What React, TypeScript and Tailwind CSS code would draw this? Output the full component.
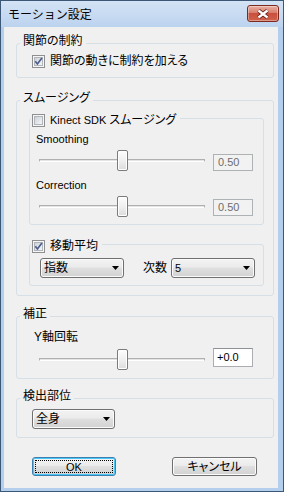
import React from "react";

const FONT = "font-['Liberation_Sans','Noto_Sans_CJK_JP',sans-serif]";

function CheckBox({ checked }: { checked?: boolean }) {
  const id = checked ? "cbOn" : "cbOff";
  return (
    <svg width="13" height="13" viewBox="0 0 13 13" className="shrink-0">
      <defs>
        <linearGradient id={id} x1="0" y1="0" x2="1" y2="1">
          <stop offset="0" stopColor="#cbd0d7" />
          <stop offset="1" stopColor="#f8f8f8" />
        </linearGradient>
      </defs>
      <rect x="0.5" y="0.5" width="12" height="12" fill="#f6f6f6" stroke="#8f8f8f" />
      <rect x="2.5" y="2.5" width="8" height="8" fill={`url(#${id})`} stroke="#b0b5bc" />
      {checked && (
        <path d="M3.3 6.2 L5.4 8.9 L9.9 3.1" fill="none" stroke="#4a5d8b" strokeWidth="1.7" />
      )}
    </svg>
  );
}

function Group({
  legend,
  className = "",
  children,
}: {
  legend: React.ReactNode;
  className?: string;
  children: React.ReactNode;
}) {
  return (
    <fieldset className={`border border-[#d5dfe5] rounded-[3px] min-w-0 ${className}`}>
      <legend className="ml-[3px] px-[3px] pb-[5px] leading-[14px]">{legend}</legend>
      {children}
    </fieldset>
  );
}

function CheckGroup({
  label,
  checked,
  className = "",
  children,
}: {
  label: React.ReactNode;
  checked?: boolean;
  className?: string;
  children: React.ReactNode;
}) {
  return (
    <fieldset className={`border border-[#d5dfe5] rounded-[3px] min-w-0 ${className}`}>
      <legend className="ml-[1px] pl-[1px] pr-[4px] pt-[3px] leading-[14px]">
        <span className="flex items-center gap-[5px] h-[14px]">
          <CheckBox checked={checked} />
          <span>{label}</span>
        </span>
      </legend>
      {children}
    </fieldset>
  );
}

function Slider({ children }: { children?: React.ReactNode }) {
  return (
    <div className="relative w-[166px] h-[21px] shrink-0">
      <div className="absolute left-0 right-0 top-[9px] h-[3px] border border-[#b0b0b0] border-b-white bg-[#e4e4e4]" />
      <div className="absolute left-[78px] top-0 w-[11px] h-[21px] rounded-[2px] border border-[#7b7b7b] bg-[linear-gradient(#fdfdfd,#efefef_50%,#dcdcdc)] shadow-[inset_0_0_0_1px_#ffffff]" />
      {children}
    </div>
  );
}

function Combo({ text, className = "", latin }: { text: string; className?: string; latin?: boolean }) {
  return (
    <div
      className={`flex items-center h-[20px] rounded-[3px] border border-[#707070] bg-[linear-gradient(#f3f3f3,#ebebeb_45%,#dfdfdf_50%,#d2d2d2)] shadow-[inset_0_0_0_1px_#fbfbfb] pl-[3px] pr-[4px] shrink-0 ${className}`}
    >
      <span className={latin ? "text-[11px]" : "text-[12px]"}>{text}</span>
      <svg className="ml-auto" width="7" height="4" viewBox="0 0 7 4">
        <path d="M0 0H7L3.5 4Z" fill="#000" />
      </svg>
    </div>
  );
}

export default function App() {
  return (
    <div
      className={`${FONT} text-[12px] leading-[14px] text-black w-[284px] h-[492px] border border-[#3d5876] bg-[#b4cfee] flex flex-col [font-feature-settings:'palt']`}
    >
      {/* Title bar */}
      <div className="h-[26px] shrink-0 flex items-start bg-[linear-gradient(#d4e3f5,#bcd3ee)]">
        <span className="ml-[7px] mt-[7px] text-[12px] [font-feature-settings:normal]">モーション設定</span>
        <div className="ml-auto mr-[4px] mt-[4px] w-[32px] h-[17px] rounded-[3px] border border-[#7c2a20] bg-[linear-gradient(#eab0a2,#d87e6c_45%,#c9503e_50%,#d0624a)] flex items-center justify-center shadow-[inset_0_0_0_1px_rgba(255,255,255,0.35)]">
          <svg width="14" height="10" viewBox="0 0 14 10">
            <path d="M2.5 1.5 L11.5 8.5 M11.5 1.5 L2.5 8.5" stroke="#5b1c14" strokeWidth="4" />
            <path d="M2.5 1.5 L11.5 8.5 M11.5 1.5 L2.5 8.5" stroke="#ffffff" strokeWidth="2.3" />
          </svg>
        </div>
      </div>

      {/* Client */}
      <div className="ml-[3px] mr-[5px] mb-[3px] flex-1 bg-[#f0f0f0] flex flex-col">
        {/* 関節の制約 */}
        <Group legend="関節の制約" className="mt-[7px] ml-[12px] w-[258px] pt-[1px] pb-[9px]">
          <div className="ml-[15px] flex items-center gap-[5px] h-[14px]">
            <CheckBox checked />
            <span>関節の動きに制約を加える</span>
          </div>
        </Group>

        {/* スムージング */}
        <Group legend="スムージング" className="mt-[13px] ml-[12px] w-[258px] pb-[9px]">
          <CheckGroup
            label={
              <>
                <span className="text-[11px]">Kinect SDK </span>スムージング
              </>
            }
            className="ml-[12px] w-[235px] pb-[7px]"
          >
            <div className="ml-[6px] mt-[5px] text-[11px] h-[14px]">Smoothing</div>
            <div className="ml-[9px] mt-[4px] flex items-start">
              <Slider />
              <div className="ml-[8px] mt-[4px] w-[40px] h-[17px] border border-[#adb2b5] bg-[#f2f2f2] text-[#6d6d6d] text-[11px] leading-[15px] pl-[4px]">
                0.50
              </div>
            </div>
            <div className="ml-[6px] mt-[7px] text-[11px] h-[14px]">Correction</div>
            <div className="ml-[9px] mt-[4px] flex items-start">
              <Slider />
              <div className="ml-[8px] mt-[3px] w-[40px] h-[17px] border border-[#adb2b5] bg-[#f2f2f2] text-[#6d6d6d] text-[11px] leading-[15px] pl-[4px]">
                0.50
              </div>
            </div>
          </CheckGroup>

          <CheckGroup label="移動平均" checked className="mt-[11px] ml-[12px] w-[235px] pb-[7px]">
            <div className="ml-[10px] mt-[5px] flex items-center">
              <Combo text="指数" className="w-[84px]" />
              <span className="ml-[19px] w-[28px]">次数</span>
              <Combo text="5" latin className="w-[84px]" />
            </div>
          </CheckGroup>
        </Group>

        {/* 補正 */}
        <Group legend="補正" className="mt-[11px] ml-[12px] w-[258px] pb-[8px]">
          <div className="ml-[17px] mt-[4px] h-[14px]">Y軸回転</div>
          <div className="ml-[22px] mt-[5px] flex items-start">
            <Slider />
            <div className="ml-[8px] -mt-[1px] w-[40px] h-[19px] border border-[#abadb3] border-t-[#8e9297] bg-white text-[11px] leading-[17px] pl-[3px]">
              +0.0
            </div>
          </div>
        </Group>

        {/* 検出部位 */}
        <Group legend="検出部位" className="mt-[10px] ml-[12px] w-[258px] pb-[8px]">
          <div className="ml-[15px] mt-[1px]">
            <Combo text="全身" className="w-[83px]" />
          </div>
        </Group>

        {/* Buttons */}
        <div className="mt-[19px] ml-[28px] flex items-center">
          <div className="relative w-[84px] h-[19px] rounded-[3px] border border-[#3c7fb1] bg-[linear-gradient(#f3f3f3,#ebebeb_45%,#dfdfdf_50%,#d2d2d2)] shadow-[inset_0_0_0_1px_#48c6f5] flex items-center justify-center">
            <span className="text-[11px] leading-[14px]">OK</span>
            <div className="absolute inset-[2px] border border-dotted border-black" />
          </div>
          <div className="ml-[56px] w-[85px] h-[19px] rounded-[3px] border border-[#707070] bg-[linear-gradient(#f3f3f3,#ebebeb_45%,#dfdfdf_50%,#d2d2d2)] shadow-[inset_0_0_0_1px_#fbfbfb] flex items-center justify-center">
            <span>キャンセル</span>
          </div>
        </div>
      </div>
    </div>
  );
}
